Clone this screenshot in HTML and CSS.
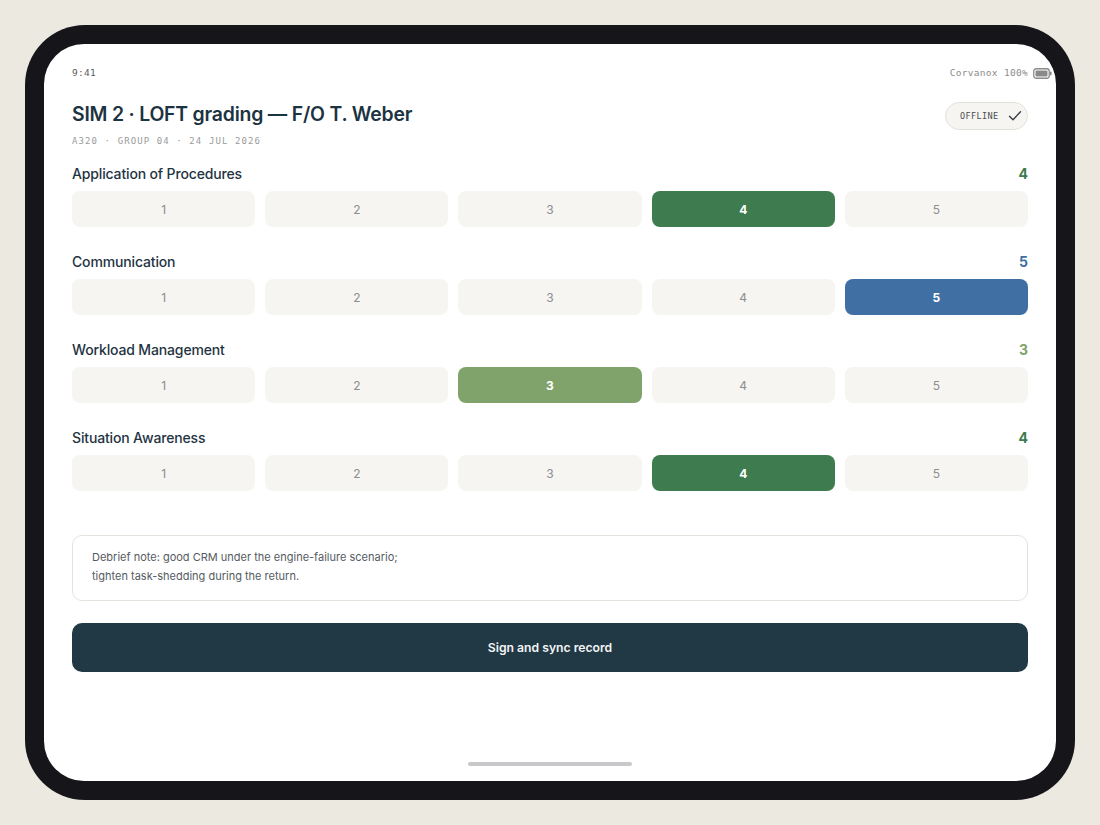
FILE: index.html
```html
<!DOCTYPE html>
<html lang="en">
<head>
<meta charset="utf-8">
<title>LOFT grading</title>
<link rel="stylesheet" href="styles.css">
</head>
<body>
<div class="device">
  <div class="screen">
    <div class="status">
      <span class="mono">9:41</span>
      <span class="status-right">
        <span class="mono">Corvanox 100%</span>
        <svg class="battery" width="19" height="11" viewBox="0 0 19 11">
          <rect x="0.75" y="0.75" width="15.5" height="9.5" rx="2.5" fill="none" stroke="#8a8a8a" stroke-width="1.3"/>
          <rect x="2.5" y="2.5" width="12" height="6" rx="1" fill="#8a8a8a"/>
          <rect x="17" y="3.5" width="1.6" height="4" rx="0.8" fill="#8a8a8a"/>
        </svg>
      </span>
    </div>

    <main class="content">
      <header class="head">
        <div class="titles">
          <h1 class="title">SIM 2 · LOFT grading — F/O T. Weber</h1>
          <div class="sub mono">A320 · GROUP 04 · 24 JUL 2026</div>
        </div>
        <div class="badge">
          <span class="mono">OFFLINE</span>
          <svg width="14" height="12" viewBox="0 0 14 12"><path d="M1.5 6.2 L5 9.8 L12.5 1.8" fill="none" stroke="#3a3f45" stroke-width="1.4" stroke-linecap="round" stroke-linejoin="round"/></svg>
        </div>
      </header>

      <section class="crit">
        <div class="crit-head"><span class="crit-name">Application of Procedures</span><span class="crit-val val-green">4</span></div>
        <div class="scale">
          <div class="opt">1</div><div class="opt">2</div><div class="opt">3</div><div class="opt sel-green">4</div><div class="opt">5</div>
        </div>
      </section>

      <section class="crit">
        <div class="crit-head"><span class="crit-name">Communication</span><span class="crit-val val-blue">5</span></div>
        <div class="scale">
          <div class="opt">1</div><div class="opt">2</div><div class="opt">3</div><div class="opt">4</div><div class="opt sel-blue">5</div>
        </div>
      </section>

      <section class="crit">
        <div class="crit-head"><span class="crit-name">Workload Management</span><span class="crit-val val-sage">3</span></div>
        <div class="scale">
          <div class="opt">1</div><div class="opt">2</div><div class="opt sel-sage">3</div><div class="opt">4</div><div class="opt">5</div>
        </div>
      </section>

      <section class="crit">
        <div class="crit-head"><span class="crit-name">Situation Awareness</span><span class="crit-val val-green">4</span></div>
        <div class="scale">
          <div class="opt">1</div><div class="opt">2</div><div class="opt">3</div><div class="opt sel-green">4</div><div class="opt">5</div>
        </div>
      </section>

      <div class="note">Debrief note: good CRM under the engine-failure scenario;<br>tighten task-shedding during the return.</div>

      <button class="sign">Sign and sync record</button>
    </main>

    <div class="home"></div>
  </div>
</div>
</body>
</html>
```

FILE: styles.css
```css
* { box-sizing: border-box; }

html, body {
  margin: 0;
  padding: 0;
  background: #ece9e1;
}

body {
  font-family: Inter, "Noto Sans", sans-serif;
  color: #1e3442;
}

.mono {
  font-family: "DejaVu Sans Mono", "Liberation Mono", monospace;
}

.device {
  margin: 25px;
  width: 1050px;
  height: 775px;
  background: #16161a;
  border-radius: 60px;
  padding: 19px;
}

.screen {
  width: 100%;
  height: 100%;
  background: #ffffff;
  border-radius: 40px;
  display: flex;
  flex-direction: column;
  overflow: hidden;
}

/* top status strip */
.status {
  display: flex;
  justify-content: space-between;
  align-items: center;
  padding: 23px 4px 0 28px;
  height: 35px;
  font-size: 9.5px;
  color: #5a5d60;
  line-height: 12px;
}

.status .mono { letter-spacing: 0.3px; }

.status-right {
  display: flex;
  align-items: center;
  gap: 5px;
  color: #8a8c8e;
}

.content {
  padding: 0 28px;
  display: flex;
  flex-direction: column;
}

.head {
  display: flex;
  justify-content: space-between;
  align-items: flex-start;
  margin-top: 22px;
}

.title {
  margin: 0;
  font-size: 19.4px;
  line-height: 26px;
  font-weight: 600;
  letter-spacing: -0.2px;
  color: #1c3341;
}

.sub {
  margin-top: 8px;
  font-size: 9px;
  line-height: 12px;
  letter-spacing: 1.1px;
  color: #9a9b9b;
}

.badge {
  margin-top: 1px;
  height: 28px;
  width: 83px;
  border: 1px solid #e3e1da;
  background: #f6f5f1;
  border-radius: 14px;
  display: flex;
  align-items: center;
  padding-left: 14px;
  gap: 9px;
  font-size: 8.5px;
  letter-spacing: 0.4px;
  color: #4a4e52;
}

/* grading criteria */
.crit { margin-top: 17px; }
.crit + .crit { margin-top: 25px; }

.crit-head {
  display: flex;
  justify-content: space-between;
  align-items: center;
  height: 18px;
}

.crit-name {
  font-size: 14px;
  font-weight: 500;
  letter-spacing: -0.15px;
  color: #1f3442;
}

.crit-val {
  font-size: 14px;
  font-weight: 700;
}

.val-green { color: #3d7a4e; }
.val-blue { color: #3f6ea2; }
.val-sage { color: #7ea269; }

.scale {
  margin-top: 9px;
  display: grid;
  grid-template-columns: repeat(5, 1fr);
  gap: 10px;
}

.opt {
  height: 36px;
  border-radius: 8px;
  background: #f6f5f2;
  display: flex;
  align-items: center;
  justify-content: center;
  font-size: 12px;
  color: #8c8e90;
}

.opt.sel-green, .opt.sel-blue, .opt.sel-sage {
  color: #ffffff;
  font-weight: 700;
}

.sel-green { background: #3e7b4f; }
.sel-blue { background: #3f6fa3; }
.sel-sage { background: #7fa36a; }

.note {
  margin-top: 44px;
  border: 1px solid #e4e2dd;
  border-radius: 10px;
  padding: 12px 19px 14px;
  font-size: 11px;
  line-height: 19px;
  color: #555b62;
}

.sign {
  margin-top: 22px;
  height: 49px;
  border: 0;
  border-radius: 10px;
  background: #213845;
  color: #f2f4f5;
  font-family: Inter, "Noto Sans", sans-serif;
  font-size: 12.2px;
  font-weight: 600;
}

.home {
  margin: auto auto 15px;
  width: 164px;
  height: 4px;
  border-radius: 2px;
  background: #c8c8ca;
}
```
